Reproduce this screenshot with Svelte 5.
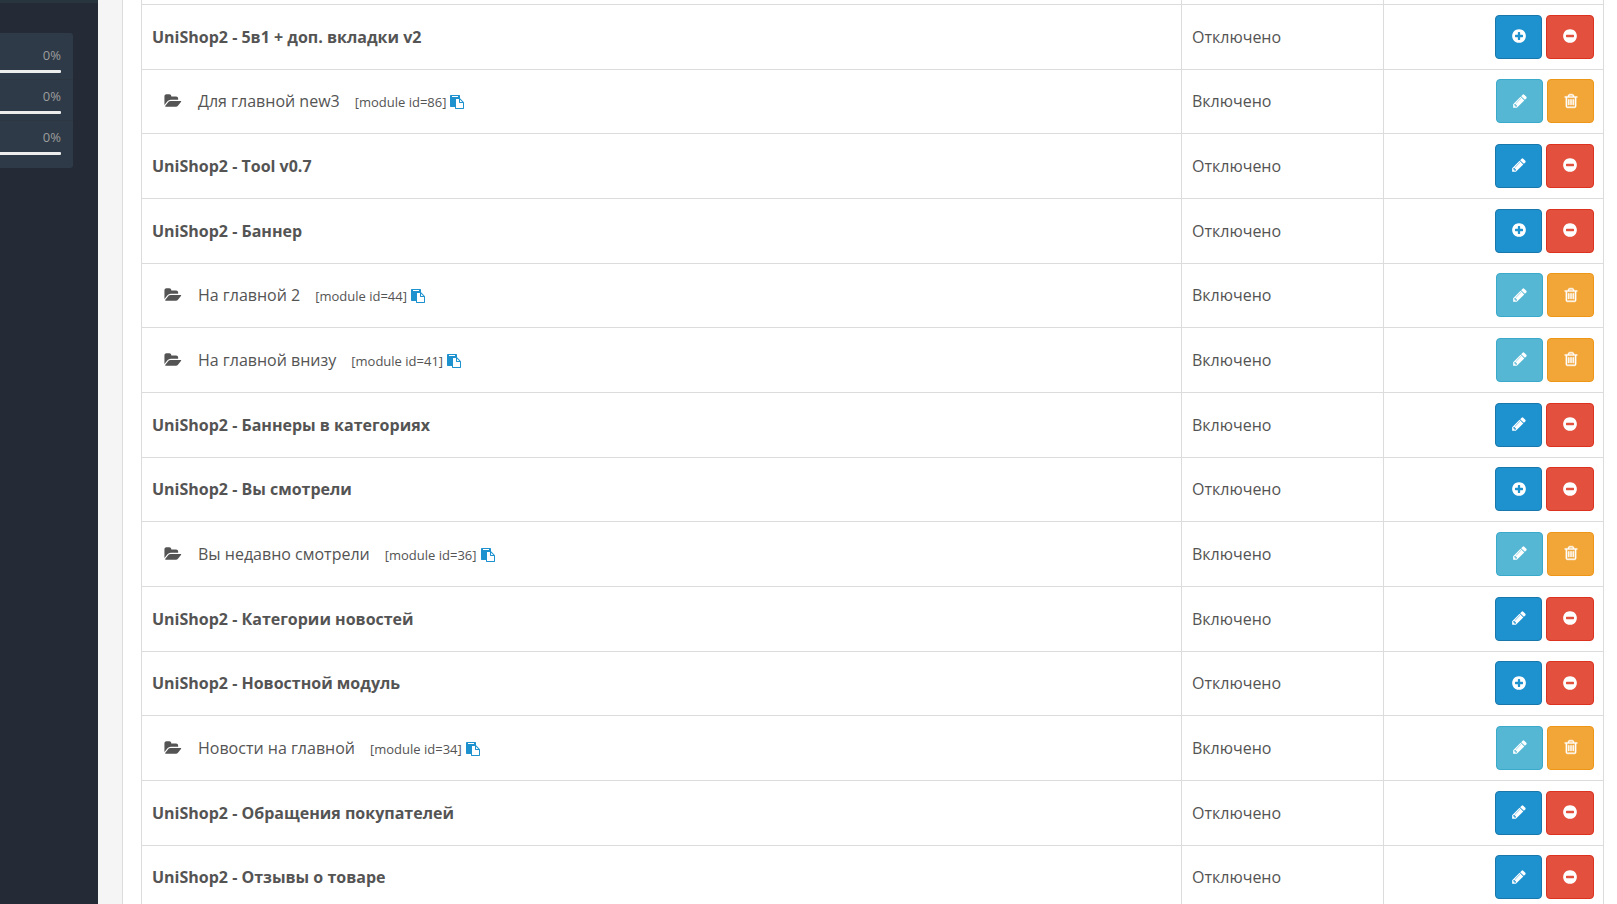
<script>
  const modules = [
    { name: 'UniShop2 - 5в1 + доп. вкладки v2', on: false, action: 'add' },
    { name: 'Для главной new3', id: 86, on: true },
    { name: 'UniShop2 - Tool v0.7', on: false, action: 'edit' },
    { name: 'UniShop2 - Баннер', on: false, action: 'add' },
    { name: 'На главной 2', id: 44, on: true },
    { name: 'На главной внизу', id: 41, on: true },
    { name: 'UniShop2 - Баннеры в категориях', on: true, action: 'edit' },
    { name: 'UniShop2 - Вы смотрели', on: false, action: 'add' },
    { name: 'Вы недавно смотрели', id: 36, on: true },
    { name: 'UniShop2 - Категории новостей', on: true, action: 'edit' },
    { name: 'UniShop2 - Новостной модуль', on: false, action: 'add' },
    { name: 'Новости на главной', id: 34, on: true },
    { name: 'UniShop2 - Обращения покупателей', on: false, action: 'edit' },
    { name: 'UniShop2 - Отзывы о товаре', on: false, action: 'edit' }
  ];
  const stats = [0, 0, 0];

  const disc = 'M1664 896q0 209-103 385.5t-279.5 279.5-385.5 103-385.5-103-279.5-279.5-103-385.5 103-385.5 279.5-279.5 385.5-103 385.5 103 279.5 279.5 103 385.5z';
  const bar = 'v576q0 14-9 23t-23 9h-64q-14 0-23-9t-9-23v-576q0-14 9-23t23-9h64q14 0 23 9t9 23z';
  const icons = {
    add: 'M1344 960v-128q0-26-19-45t-45-19h-256v-256q0-26-19-45t-45-19h-128q-26 0-45 19t-19 45v256h-256q-26 0-45 19t-19 45v128q0 26 19 45t45 19h256v256q0 26 19 45t45 19h128q26 0 45-19t19-45v-256h256q26 0 45-19t19-45z' + disc,
    minus: 'M1344 960v-128q0-26-19-45t-45-19h-768q-26 0-45 19t-19 45v128q0 26 19 45t45 19h768q26 0 45-19t19-45z' + disc,
    edit: 'M491 1536l91-91-235-235-91 91v107h128v128h107zm523-928q0-22-22-22-10 0-17 7l-542 542q-7 7-7 17 0 22 22 22 10 0 17-7l542-542q7-7 7-17zm-54-192l416 416-832 832h-416v-416zm683 96q0 53-37 90l-166 166-416-416 166-165q36-38 90-38 53 0 91 38l235 234q37 39 37 91z',
    trash: `M704 736${bar}M960 736${bar}M1216 736${bar}M1344 1460v-948h-896v948q0 22 7 40.5t14.5 27 10.5 8.5h832q3 0 10.5-8.5t14.5-27 7-40.5zm-672-1076h448l-48-117q-7-9-17-11h-317q-10 2-17 11zm928 32v64q0 14-9 23t-23 9h-96v948q0 83-47 143.5t-113 60.5h-832q-66 0-113-58.5t-47-141.5v-952h-96q-14 0-23-9t-9-23v-64q0-14 9-23t23-9h309l70-167q15-37 54-63t79-26h320q40 0 79 26t54 63l70 167h309q14 0 23 9t9 23z`,
    folder: 'M1879 952q0 31-31 66l-336 396q-43 51-120.5 86.5t-143.5 35.5h-1088q-34 0-60.5-13t-26.5-43q0-31 31-66l336-396q43-51 120.5-86.5t143.5-35.5h1088q34 0 60.5 13t26.5 43zm-343-344v160h-832q-94 0-197 47.5t-164 119.5l-337 396-5 6q0-4-.5-12.5t-.5-12.5v-960q0-92 66-158t158-66h320q92 0 158 66t66 158v32h544q92 0 158 66t66 158z',
    paste: 'M768 1664h896v-640h-416q-40 0-68-28t-28-68v-416h-384v1152zm256-1440v-64q0-13-9.5-22.5t-22.5-9.5h-704q-13 0-22.5 9.5t-9.5 22.5v64q0 13 9.5 22.5t22.5 9.5h704q13 0 22.5-9.5t9.5-22.5zm256 672h299l-299-299v299zm512 128v672q0 40-28 68t-68 28h-960q-40 0-68-28t-28-68v-160h-544q-40 0-68-28t-28-68v-1344q0-40 28-68t68-28h1088q40 0 68 28t28 68v328q21 13 36 28l408 408q28 28 48 76t20 88z'
  };
</script>

{#snippet icon(name)}
  <svg class={name} viewBox={name === 'folder' ? '0 0 1920 1792' : '0 0 1792 1792'} aria-hidden="true">
    <path fill-rule="evenodd" d={icons[name]} />
  </svg>
{/snippet}

<div class="page">
  <aside>
    <ul class="stats">
      {#each stats as value}
        <li>
          <span>{value}%</span>
          <div class="track"><div class="fill" style:width="{value}%"></div></div>
        </li>
      {/each}
    </ul>
  </aside>
  <main>
    <div class="panel">
      <table>
        <colgroup><col /><col class="status" /><col class="actions" /></colgroup>
        <tbody>
          <tr class="lead"><td></td><td></td><td></td></tr>
          {#each modules as m}
            <tr>
              <td>
                {#if m.id}
                  <div class="child">
                    {@render icon('folder')}
                    <span class="title">{m.name}</span>
                    <span class="tag">
                      [module id={m.id}]
                      <button class="copy" aria-label="Copy">{@render icon('paste')}</button>
                    </span>
                  </div>
                {:else}
                  <b>{m.name}</b>
                {/if}
              </td>
              <td>{m.on ? 'Включено' : 'Отключено'}</td>
              <td class="controls">
                <div class="buttons">
                  {#if m.id}
                    <button class="btn info" aria-label="Edit">{@render icon('edit')}</button>
                    <button class="btn warning" aria-label="Delete">{@render icon('trash')}</button>
                  {:else}
                    <button class="btn primary" aria-label={m.action}>{@render icon(m.action)}</button>
                    <button class="btn danger" aria-label="Uninstall">{@render icon('minus')}</button>
                  {/if}
                </div>
              </td>
            </tr>
          {/each}
        </tbody>
      </table>
    </div>
  </main>
</div>

<style>
  :global(body) {
    margin: 0;
    overflow: hidden;
  }
  .page {
    display: flex;
    height: 100vh;
    overflow: hidden;
    background: #f5f5f5;
    color: #545454;
    font: 16px/22px 'Open Sans', sans-serif;
  }
  aside {
    box-sizing: border-box;
    flex: none;
    width: 98px;
    padding: 30px 25px 0 0;
    border-top: 3px solid #28353f;
    background: #242b36;
  }
  .stats {
    margin: 0;
    padding: 12px 0 13px;
    list-style: none;
    border-radius: 0 3px 3px 0;
    background: #2e3a47;
  }
  li {
    padding: 0 12px 6px 0;
    color: #9d9d9d;
    font-size: 13px;
    line-height: 20px;
    text-align: right;
    border-bottom: 1px solid #2d3742;
  }
  li:last-child {
    padding-bottom: 0;
    border-bottom: 0;
  }
  li + li {
    padding-top: 6px;
  }
  .track {
    height: 3px;
    margin-top: 5px;
    background: #ededed;
    border-radius: 0 1px 1px 0;
  }
  .fill {
    height: 100%;
    background: #1e91cf;
  }
  main {
    flex: 1;
    min-width: 0;
    padding-left: 24px;
  }
  .panel {
    min-height: 100%;
    padding: 0 13px 0 18px;
    border-left: 1px solid #dcdcdc;
    background: #fff;
  }
  table {
    width: 100%;
    table-layout: fixed;
    border-collapse: collapse;
  }
  .status {
    width: 202px;
  }
  .actions {
    width: 220px;
  }
  td {
    box-sizing: border-box;
    height: 65px;
    padding: 0 10px;
    border: 1px solid #dcdcdc;
    vertical-align: middle;
  }
  .controls {
    padding: 0 9px 0 10px;
  }
  tr:nth-child(3n) td {
    height: 64px;
  }
  .lead td {
    height: 4px;
    padding: 0;
    border-top: 0;
  }
  .child {
    display: flex;
    align-items: center;
    padding-left: 12px;
  }
  svg {
    display: block;
    width: 16px;
    height: 16px;
    fill: currentColor;
  }
  .folder {
    width: 18px;
  }
  .title {
    margin: 0 15px 0 16px;
  }
  .tag {
    display: flex;
    align-items: center;
    gap: 4px;
    padding-top: 2px;
    font-size: 13px;
  }
  button {
    padding: 0;
    font: inherit;
    cursor: pointer;
  }
  .copy {
    border: 0;
    background: none;
    color: #1e91cf;
  }
  .copy svg {
    width: 14px;
    height: 14px;
  }
  .buttons {
    display: flex;
    justify-content: flex-end;
    gap: 4px;
  }
  .btn {
    display: flex;
    align-items: center;
    justify-content: center;
    width: 47px;
    height: 44px;
    padding-bottom: 1px;
    border: 1px solid;
    border-radius: 4px;
  }
  .btn svg {
    color: #fff;
  }
  .trash {
    stroke: currentColor;
    stroke-width: 50;
  }
  .primary {
    border-color: #1978ab;
    background: #1e91cf;
  }
  .danger {
    width: 48px;
    border-color: #dc3220;
    background: #e3503e;
  }
  .info {
    border-color: #3aa9ca;
    background: #55b7d4;
  }
  .warning {
    border-color: #ee9618;
    background: #f2a638;
  }
</style>
